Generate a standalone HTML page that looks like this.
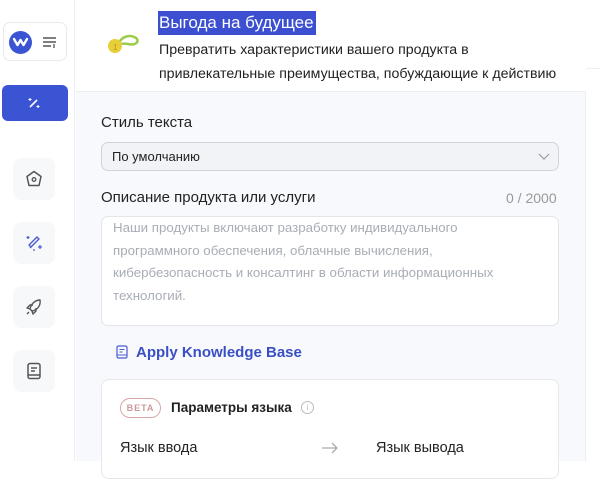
<!DOCTYPE html>
<html><head><meta charset="utf-8"><style>
*{box-sizing:border-box;margin:0;padding:0}
body{width:600px;height:461px;overflow:hidden;background:#fff;font-family:"Liberation Sans","DejaVu Sans",sans-serif;position:relative;color:#222}
.abs{position:absolute}
.side{left:0;top:0;width:75px;height:461px;background:#fff;border-right:1px solid #eceef2}
.ib{position:absolute;left:13px;width:42px;height:42px;border-radius:8px;background:#f7f8fa;display:flex;align-items:center;justify-content:center}
.main{left:76px;top:0;width:510px;height:461px;background:#f7f9fc;border-right:1px solid #eceef2}
.hdr{left:76px;top:0;width:510px;height:92px;background:#fff;border-bottom:1px solid #eceef2}
</style></head><body>
<div class="abs side"></div>
<div class="abs" style="left:3px;top:22px;width:64px;height:39px;border:1px solid #e8eaee;border-radius:7px;background:#fff"></div>
<div class="abs" style="left:9px;top:31px;width:23px;height:23px;border-radius:50%;background:#3b54d4"></div>
<svg class="abs" style="left:11px;top:35px" width="19" height="14" viewBox="0 0 19 14"><path d="M3 4 L6.5 10 L9.5 5 L12.5 10 L16 4" stroke="#fff" stroke-width="2.4" fill="none" stroke-linecap="round" stroke-linejoin="round"/></svg>
<svg class="abs" style="left:42px;top:36px" width="16" height="12" viewBox="0 0 16 12"><path d="M1 2H14M1 6H14M1 10H9" stroke="#555" stroke-width="1.5"/><path d="M12 8v4" stroke="#555" stroke-width="1.3"/></svg>
<div class="abs" style="left:2px;top:85px;width:66px;height:36px;border-radius:6px;background:#3b54d4"></div>
<svg class="abs" style="left:27px;top:96px" width="14" height="14" viewBox="0 0 14 14"><path d="M3 11L10 4" stroke="#fff" stroke-width="1.6"/><path d="M3 2v3M1.5 3.5h3M11 9v3M9.5 10.5h3" stroke="#fff" stroke-width="1.1"/></svg>
<div class="ib" style="top:158px"><svg width="20" height="20" viewBox="0 0 20 20"><path d="M10 2.5L17 7.5L15 16.5H5L3 7.5Z" fill="none" stroke="#555" stroke-width="1.5" stroke-linejoin="round"/><circle cx="10" cy="10.5" r="1.8" fill="none" stroke="#555" stroke-width="1.3"/></svg></div>
<div class="ib" style="top:222px"><svg width="20" height="20" viewBox="0 0 20 20"><path d="M6 15L14 7M7 14L5 12M15 6L13 4L5 12L7 14Z" fill="none" stroke="#4a5bd0" stroke-width="1.4" stroke-linejoin="round"/><path d="M4 3v3M2.5 4.5h3M16 12v4M14 14h4M10 16v2" stroke="#4a5bd0" stroke-width="1.2"/></svg></div>
<div class="ib" style="top:286px"><svg width="20" height="20" viewBox="0 0 20 20"><path d="M16 3C11 3 7 7 6 12L8 14C13 13 17 9 16 3Z" fill="none" stroke="#555" stroke-width="1.4" stroke-linejoin="round"/><path d="M6 12L3 11L6 8H9M8 14L9 17L12 14V11M5 15L3 17" fill="none" stroke="#555" stroke-width="1.4" stroke-linejoin="round"/></svg></div>
<div class="ib" style="top:350px"><svg width="20" height="20" viewBox="0 0 20 20"><rect x="4" y="2.5" width="12" height="15" rx="2" fill="none" stroke="#555" stroke-width="1.5"/><path d="M7 7h6M7 10h4M4 14h12" stroke="#555" stroke-width="1.4"/></svg></div>

<div class="abs main"></div>
<div class="abs hdr"></div>
<div class="abs" style="left:586px;top:68px;width:14px;height:1px;background:#eceef2"></div>
<svg class="abs" style="left:100px;top:30px" width="42" height="30" viewBox="0 0 42 30"><path d="M18 14C22 6 30 4 36 8C40 11 36 16 28 14C24 13 20 14 18 14" fill="none" stroke="#9ccc4a" stroke-width="2.5"/><circle cx="15" cy="16" r="7" fill="#e8cf3a"/><text x="13" y="20" font-size="8" fill="#b89a20">1</text></svg>
<div class="abs" style="left:158px;top:11px;width:158px;height:24px;background:#3b4fd0"></div>
<div class="abs" style="left:159px;top:12px;font-size:17px;color:#fff;line-height:22px">Выгода на будущее</div>
<div class="abs" style="left:159px;top:38px;font-size:14.2px;line-height:24px;color:#222;width:430px">Превратить характеристики вашего продукта в<br>привлекательные преимущества, побуждающие к действию</div>

<div class="abs" style="left:101px;top:114px;font-size:15px;color:#222">Стиль текста</div>
<div class="abs" style="left:101px;top:142px;width:458px;height:29px;border:1px solid #cfd3da;border-radius:7px;background:#f1f3f6"></div>
<div class="abs" style="left:112px;top:149px;font-size:13px;color:#222">По умолчанию</div>
<svg class="abs" style="left:538px;top:151px" width="12" height="10"><path d="M1 3l5 5 5-5" fill="none" stroke="#999" stroke-width="1.2"/></svg>
<div class="abs" style="left:101px;top:189px;font-size:15px;color:#222">Описание продукта или услуги</div>
<div class="abs" style="left:506px;top:190px;font-size:14px;color:#999">0 / 2000</div>
<div class="abs" style="left:101px;top:216px;width:458px;height:110px;border:1px solid #e2e5ea;border-radius:7px;background:#fff"></div>
<div class="abs" style="left:113px;top:217px;font-size:13.3px;line-height:22.5px;color:#a8adb5;width:400px">Наши продукты включают разработку индивидуального<br>программного обеспечения, облачные вычисления,<br>кибербезопасность и консалтинг в области информационных<br>технологий.</div>
<svg class="abs" style="left:116px;top:345px" width="12" height="14" viewBox="0 0 12 14"><rect x="1" y="1" width="10" height="12" rx="1.5" fill="none" stroke="#4a5bd0" stroke-width="1.2"/><path d="M3.5 4.5h5M3.5 7h3M1 10h10" stroke="#4a5bd0" stroke-width="1.1"/></svg>
<div class="abs" style="left:136px;top:344px;font-size:15px;font-weight:bold;color:#3b4fc4">Apply Knowledge Base</div>
<div class="abs" style="left:101px;top:379px;width:458px;height:100px;border:1px solid #e6e8ec;border-radius:8px;background:#fff"></div>
<div class="abs" style="left:120px;top:398px;width:41px;height:20px;border:1px solid #d9a7a7;border-radius:10px;font-size:9px;letter-spacing:1px;color:#c99;text-align:center;line-height:18px;font-weight:bold">BETA</div>
<div class="abs" style="left:171px;top:400px;font-size:13.5px;font-weight:bold;color:#222">Параметры языка</div>
<div class="abs" style="left:301px;top:401px;width:13px;height:13px;border:1px solid #bbb;border-radius:50%;font-size:8px;color:#bbb;text-align:center;line-height:11px">i</div>
<div class="abs" style="left:120px;top:440px;font-size:14.5px;color:#222">Язык ввода</div>
<svg class="abs" style="left:321px;top:442px" width="18" height="12"><path d="M1 6h15M11 1l5 5-5 5" fill="none" stroke="#aaa" stroke-width="1.3"/></svg>
<div class="abs" style="left:376px;top:440px;font-size:14.5px;color:#222">Язык вывода</div>
</body></html>
